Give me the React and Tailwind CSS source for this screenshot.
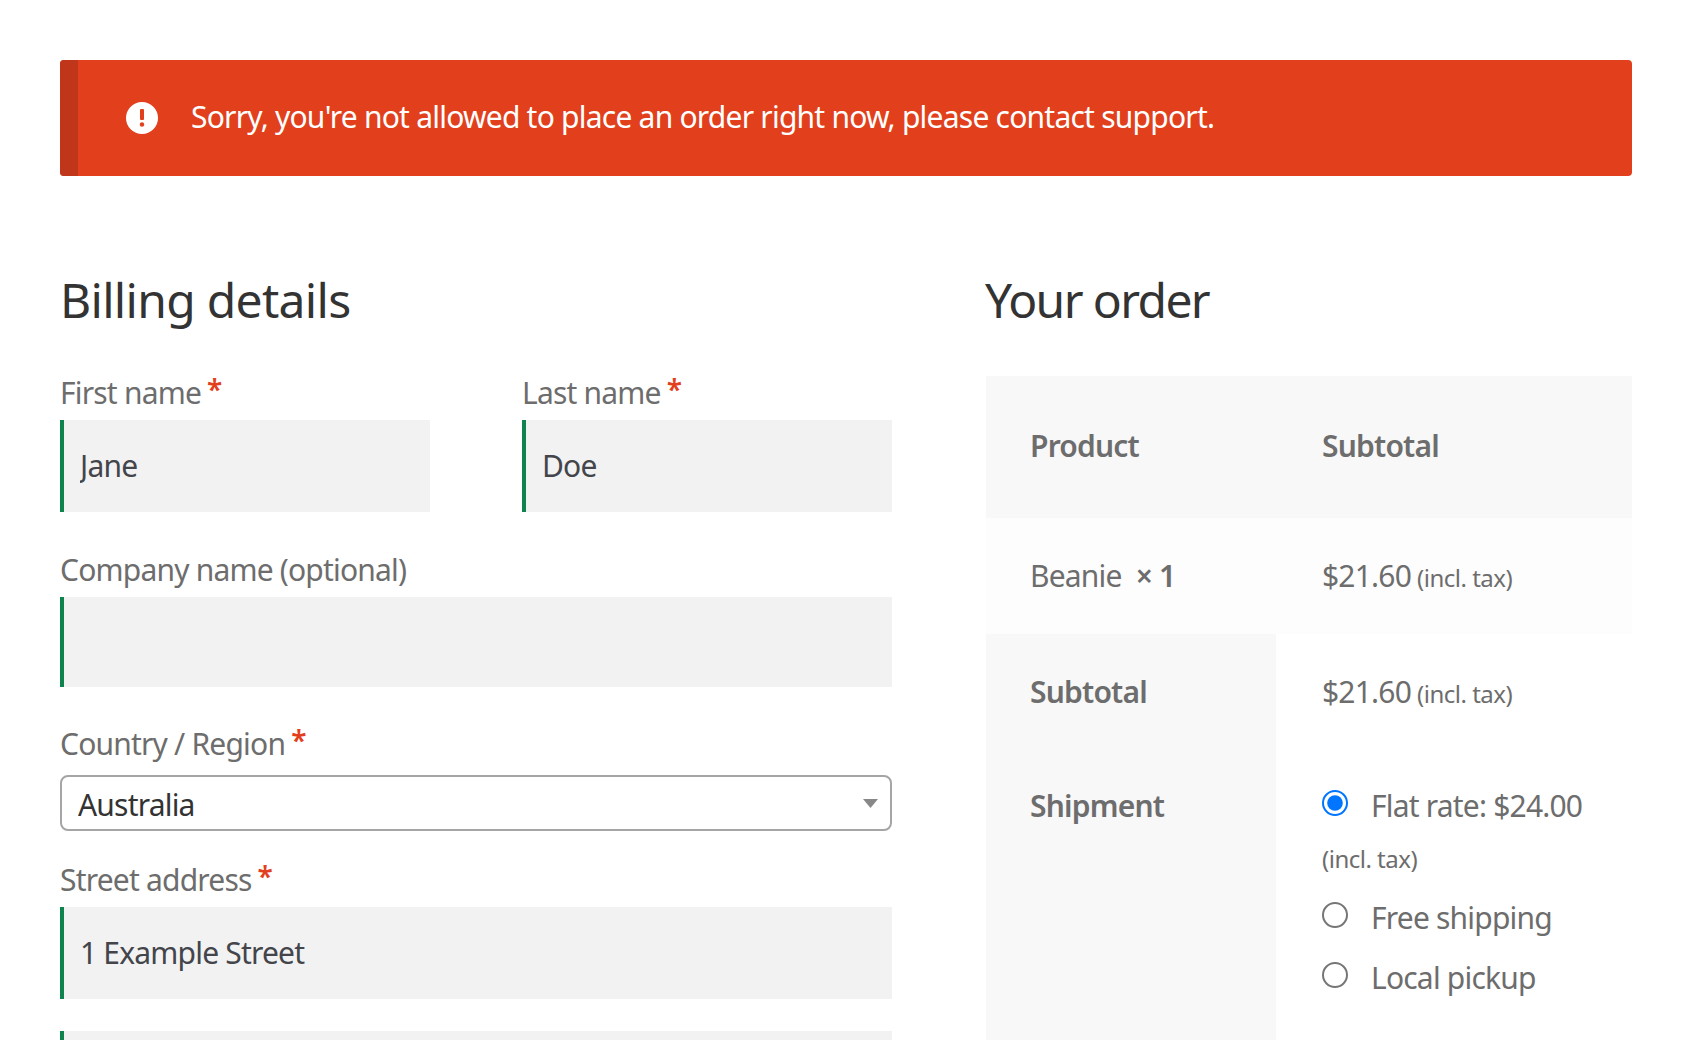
const sans = "font-['Noto_Sans',sans-serif]";

const Required = () => <span className="text-[#e2401c] ml-[6px] text-[28px] leading-[0] font-semibold tracking-normal align-[4px]">*</span>;

const Field = ({ label, required, value, inputClass = 'h-[92px]', className = '' }) => (
  <div className={className}>
    <label className="block text-[30px] leading-[40px] tracking-[-0.8px] text-[#6d6d6d] mb-[7px]">
      {label}
      {required && <Required />}
    </label>
    <input
      type="text"
      readOnly
      value={value || ''}
      className={`block w-full bg-[#f2f2f2] border-l-4 border-[#0f834d] pl-[16px] pb-[2px] text-[30px] tracking-[-0.8px] text-[#43454b] outline-none ${inputClass}`}
    />
  </div>
);

const ExclamationIcon = () => (
  <svg width="32" height="32" viewBox="0 0 32 32" className="shrink-0">
    <circle cx="16" cy="16" r="16" fill="#fff" />
    <rect x="14" y="7" width="4" height="11" rx="1" fill="#e2401c" />
    <circle cx="16" cy="22.5" r="2.2" fill="#e2401c" />
  </svg>
);

const Tax = () => <span className="text-[24px] tracking-[-0.5px] ml-[6px]">(incl. tax)</span>;

const Radio = ({ label, checked }) => (
  <label className="flex items-center h-[40px]">
    <input type="radio" name="shipping" readOnly checked={!!checked} className="m-0 w-[13px] h-[13px] [zoom:2] accent-[#0075ff] shrink-0" />
    <span className="ml-[23px] mt-[4px]">{label}</span>
  </label>
);

export default function App() {
  return (
    <div className={`h-screen overflow-hidden bg-white px-[60px] pt-[60px] ${sans}`}>
      {/* Notice */}
      <div className="flex items-center h-[116px] rounded-[4px] overflow-hidden bg-[#e2401c] text-white">
        <div className="w-[18px] h-full bg-[#bf361a]" />
        <div className="ml-[48px]"><ExclamationIcon /></div>
        <p className="ml-[33px] pb-[3px] text-[30px] tracking-[-0.77px]">
          Sorry, you're not allowed to place an order right now, please contact support.
        </p>
      </div>

      <div className="grid grid-cols-[832px_646px] gap-x-[94px] mt-[88px]">
        {/* Billing */}
        <div>
          <h3 className="text-[48px] leading-[72px] tracking-[-0.7px] text-[#333] mb-[37px]">Billing details</h3>
          <div className="grid grid-cols-[370px_370px] gap-x-[92px]">
            <Field label="First name" required value="Jane" />
            <Field label="Last name" required value="Doe" />
          </div>
          <Field label="Company name (optional)" inputClass="h-[90px]" className="mt-[38px]" />
          <div className="mt-[37px]">
            <label className="block text-[30px] leading-[40px] tracking-[-0.8px] text-[#6d6d6d] mb-[11px]">
              Country / Region<Required />
            </label>
            <div className="relative">
              <select className="block w-full h-[56px] appearance-none rounded-[8px] border-2 border-[#a5a5a5] bg-white pl-[16px] pt-[3px] text-[30px] tracking-[-0.8px] text-[#333] outline-none">
                <option>Australia</option>
              </select>
              <svg width="15" height="9" viewBox="0 0 15 9" className="absolute right-[14px] top-[24px]">
                <path d="M0 0h15L7.5 9z" fill="#888" />
              </svg>
            </div>
          </div>
          <Field label="Street address" required value="1 Example Street" className="mt-[29px]" />
          <div className="mt-[32px] h-[92px] bg-[#f2f2f2] border-l-4 border-[#0f834d]" />
        </div>

        {/* Order */}
        <div>
          <h3 className="text-[48px] leading-[72px] tracking-[-1.6px] text-[#333] mb-[40px] -ml-[1px]">Your order</h3>
          <table className="w-full table-fixed text-[30px] tracking-[-0.8px] text-[#6d6d6d]">
            <colgroup>
              <col className="w-[290px]" />
              <col />
            </colgroup>
            <thead>
              <tr className="h-[142px] bg-[#f8f8f8]">
                <th className="pl-[44px] pb-[4px] text-left font-semibold">Product</th>
                <th className="pl-[46px] pb-[4px] text-left font-semibold">Subtotal</th>
              </tr>
            </thead>
            <tbody>
              <tr className="h-[116px] bg-[#fdfdfd]">
                <td className="pl-[44px] pb-[2px]">Beanie <strong className="ml-[7px] font-semibold">× 1</strong></td>
                <td className="pl-[46px] pb-[2px]">$21.60<Tax /></td>
              </tr>
              <tr className="h-[116px]">
                <th className="pl-[44px] pb-[2px] text-left font-semibold bg-[#f8f8f8]">Subtotal</th>
                <td className="pl-[46px] pb-[2px]">$21.60<Tax /></td>
              </tr>
              <tr>
                <th className="pl-[44px] align-top text-left font-semibold bg-[#f8f8f8] pt-[33px]">Shipment</th>
                <td className="pl-[46px] pt-[33px] pb-[80px] align-top">
                  <Radio label="Flat rate: $24.00" checked />
                  <div className="mt-[16px] text-[24px] tracking-[-0.5px] leading-[40px]">(incl. tax)</div>
                  <div className="mt-[16px]"><Radio label="Free shipping" /></div>
                  <div className="mt-[20px]"><Radio label="Local pickup" /></div>
                </td>
              </tr>
            </tbody>
          </table>
        </div>
      </div>
    </div>
  );
}
